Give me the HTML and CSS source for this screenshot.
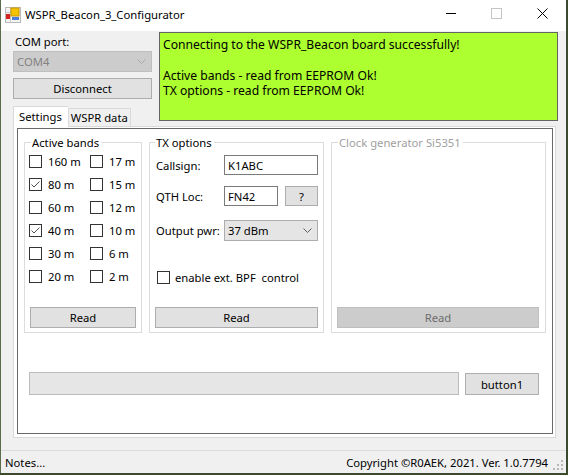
FILE: index.html
```html
<!DOCTYPE html>
<html>
<head>
<meta charset="utf-8">
<link rel="stylesheet" href="styles.css">
</head>
<body>
<div class="window">
  <div class="titlebar">
    <svg class="appicon" width="16" height="16" viewBox="0 0 16 16">
      <rect x="0.5" y="0.5" width="15" height="15" fill="#f4f4f4" stroke="#b8b8b8"/>
      <line x1="0.5" y1="5.5" x2="15.5" y2="5.5" stroke="#c8c8c8"/>
      <line x1="5.5" y1="0.5" x2="5.5" y2="15.5" stroke="#c8c8c8"/>
      <rect x="6" y="1" width="8" height="8" fill="#f5c400" stroke="#c89600"/>
      <rect x="1" y="7" width="4" height="5" fill="#d8201c"/>
      <rect x="7" y="10" width="7" height="3" fill="#4a7ed8"/>
    </svg>
    <span class="title">WSPR_Beacon_3_Configurator</span>
    <div class="winctrls">
      <svg class="wc" width="46" height="30" viewBox="0 0 46 30"><line x1="18" y1="13.5" x2="28" y2="13.5" stroke="#000"/></svg>
      <svg class="wc" width="46" height="30" viewBox="0 0 46 30"><rect x="17.5" y="8.5" width="10" height="10" fill="none" stroke="#c4c4c4"/></svg>
      <svg class="wc" width="46" height="30" viewBox="0 0 46 30"><path d="M17.5 8.5 L27.5 18.5 M27.5 8.5 L17.5 18.5" stroke="#000" stroke-width="1"/></svg>
    </div>
  </div>
  <div class="client">
    <div class="top">
      <div class="leftcol">
        <div class="lbl com-lbl">COM port:</div>
        <div class="combo combo-disabled">
          <span>COM4</span>
          <svg width="9" height="5" viewBox="0 0 9 5"><path d="M0.5 0.5 L4.5 4.5 L8.5 0.5" fill="none" stroke="#a8a8a8"/></svg>
        </div>
        <div class="btn disconnect">Disconnect</div>
        <div class="tabs">
          <div class="tab tab-active">Settings</div>
          <div class="tab">WSPR data</div>
        </div>
      </div>
      <div class="log">
        <div>Connecting to the WSPR_Beacon board successfully!</div>
        <div>&nbsp;</div>
        <div>Active bands - read from EEPROM Ok!</div>
        <div>TX options - read from EEPROM Ok!</div>
      </div>
    </div>
    <div class="tabpanel">
      <div class="page">
        <div class="groups">
          <div class="grp grp-bands">
            <div class="grp-title">Active bands</div>
            <div class="bands">
              <div class="cbrow"><span class="cb"></span><span>160 m</span></div>
              <div class="cbrow"><span class="cb"></span><span>17 m</span></div>
              <div class="cbrow"><span class="cb"><svg width="11" height="11" viewBox="0 0 11 11"><path d="M1.5 5.5 L4 8 L9.5 2.5" fill="none" stroke="#505050" stroke-width="1"/></svg></span><span>80 m</span></div>
              <div class="cbrow"><span class="cb"></span><span>15 m</span></div>
              <div class="cbrow"><span class="cb"></span><span>60 m</span></div>
              <div class="cbrow"><span class="cb"></span><span>12 m</span></div>
              <div class="cbrow"><span class="cb"><svg width="11" height="11" viewBox="0 0 11 11"><path d="M1.5 5.5 L4 8 L9.5 2.5" fill="none" stroke="#505050" stroke-width="1"/></svg></span><span>40 m</span></div>
              <div class="cbrow"><span class="cb"></span><span>10 m</span></div>
              <div class="cbrow"><span class="cb"></span><span>30 m</span></div>
              <div class="cbrow"><span class="cb"></span><span>6 m</span></div>
              <div class="cbrow"><span class="cb"></span><span>20 m</span></div>
              <div class="cbrow"><span class="cb"></span><span>2 m</span></div>
            </div>
            <div class="btn read read-bands">Read</div>
          </div>
          <div class="grp grp-tx">
            <div class="grp-title">TX options</div>
            <div class="frow frow1"><span class="flbl">Callsign:</span><span class="tbox tbox-wide">K1ABC</span></div>
            <div class="frow frow2"><span class="flbl">QTH Loc:</span><span class="tbox tbox-short">FN42</span><span class="btn qbtn">?</span></div>
            <div class="frow frow3"><span class="flbl">Output pwr:</span>
              <span class="combo combo-pwr"><span>37 dBm</span><svg width="9" height="5" viewBox="0 0 9 5"><path d="M0.5 0.5 L4.5 4.5 L8.5 0.5" fill="none" stroke="#606060"/></svg></span>
            </div>
            <div class="cbrow bpf"><span class="cb"></span><span>enable ext. BPF&nbsp; control</span></div>
            <div class="btn read read-tx">Read</div>
          </div>
          <div class="grp grp-clk">
            <div class="grp-title grp-title-dis">Clock generator Si5351</div>
            <div class="btn read read-clk">Read</div>
          </div>
        </div>
        <div class="progrow">
          <div class="progress"></div>
          <div class="btn btn1">button1</div>
        </div>
      </div>
    </div>
  </div>
  <div class="statusbar">
    <span class="notes">Notes...</span>
    <span class="copy">Copyright ©R0AEK, 2021. Ver. 1.0.7794</span>
    <svg class="grip" width="12" height="12" viewBox="0 0 12 12">
      <rect x="9" y="1" width="2" height="2" fill="#b8b8b8"/>
      <rect x="5" y="5" width="2" height="2" fill="#b8b8b8"/>
      <rect x="9" y="5" width="2" height="2" fill="#b8b8b8"/>
      <rect x="1" y="9" width="2" height="2" fill="#b8b8b8"/>
      <rect x="5" y="9" width="2" height="2" fill="#b8b8b8"/>
      <rect x="9" y="9" width="2" height="2" fill="#b8b8b8"/>
    </svg>
  </div>
</div>
</body>
</html>
```

FILE: styles.css
```css
* { box-sizing: border-box; }
html, body { margin: 0; padding: 0; }
body {
  width: 568px;
  height: 475px;
  background: #3c4a2e;
  font-family: "Noto Sans", "Liberation Sans", sans-serif;
  font-size: 11.25px;
  color: #000;
  overflow: hidden;
}
.window {
  width: 566px;
  height: 473px;
  background: #f0f0f0;
  border-left: 1px solid #5d6b4a;
  display: flex;
  flex-direction: column;
}
.titlebar {
  height: 31px;
  background: #fff;
  display: flex;
  align-items: center;
  flex: none;
}
.appicon { margin-left: 4px; margin-top: -2px; }
.title { margin-left: 4px; font-size: 11.3px; margin-top: -2px; }
.winctrls { margin-left: auto; display: flex; align-self: flex-start; }
.wc { display: block; }

.client { padding-left: 12px; flex: none; }
.top { display: flex; }
.leftcol { width: 139px; display: flex; flex-direction: column; }
.lbl { line-height: 15px; }
.com-lbl { margin-top: 3px; margin-left: 2px; }
.combo {
  display: flex;
  align-items: center;
  justify-content: space-between;
  height: 21px;
  border: 1px solid #adadad;
  padding: 0 5px 0 3px;
}
.combo-disabled {
  margin-top: 2px;
  background: #cccccc;
  border-color: #bfbfbf;
  color: #838383;
}
.btn {
  display: flex;
  align-items: center;
  justify-content: center;
  background: #e1e1e1;
  border: 1px solid #adadad;
  height: 21px;
}
.disconnect { margin-top: 6px; }
.tabs { display: flex; align-items: flex-end; margin-top: 7px; height: 20px; }
.tab {
  height: 18px;
  padding: 0 2px 0 2px;
  border: 1px solid #d9d9d9;
  border-bottom: none;
  background: #f0f0f0;
  line-height: 17px;
}
.tab-active {
  height: 21px;
  margin-bottom: -1px;
  background: #fff;
  position: relative;
  z-index: 1;
  padding: 0 6px 0 5px;
  line-height: 19px;
  border-right: none;
}
.log {
  margin-left: 7px;
  margin-top: 1px;
  width: 399px;
  height: 89px;
  background: #adff2f;
  border: 1px solid #646464;
  padding: 4px 3px;
  line-height: 15.3px;
  font-size: 12.15px;
}

.tabpanel {
  width: 543px;
  height: 312px;
  border: 1px solid #d9d9d9;
  background: #fff;
  padding: 1px 2px 3px 3px;
}
.page {
  height: 100%;
  border: 1px solid #696969;
  background: #fff;
}
.groups { display: flex; margin-top: 13px; margin-left: 6px; }
.grp {
  border: 1px solid #dcdcdc;
  height: 191px;
  display: flex;
  flex-direction: column;
}
.grp-title {
  margin: -8px 0 0 1px;
  padding: 0 2px 0 1px;
  background: #fff;
  line-height: 15px;
  align-self: flex-start;
}
.grp-bands .grp-title { margin-left: 2px; }
.grp-tx .grp-title { margin-left: 0; }
.grp-title-dis { color: #a0a0a0; }
.grp-bands { width: 118px; padding: 0 0 4px 4px; }
.grp-tx { width: 175px; margin-left: 7px; padding: 0 0 4px 5px; }
.grp-clk { width: 215px; margin-left: 7px; padding: 0 0 4px 5px; }

.bands { display: grid; grid-template-columns: 61px 1fr; grid-auto-rows: 23px; }
.cbrow { display: flex; align-items: center; }
.cb {
  width: 13px;
  height: 13px;
  border: 1px solid #333;
  background: #fff;
  flex: none;
  margin-right: 6px;
  display: flex;
  align-items: center;
  justify-content: center;
}
.cb svg { display: block; }
.read { margin-top: auto; }
.read-bands { width: 106px; margin-left: 1px; }
.read-tx { width: 163px; margin-left: 0; }
.read-clk { width: 202px; background: #cccccc; border-color: #bfbfbf; color: #6d6d6d; }

.frow { display: flex; align-items: center; }
.flbl { width: 69px; padding-left: 1px; white-space: nowrap; }
.frow1 { margin-top: 5px; }
.frow2 { margin-top: 11px; }
.frow3 { margin-top: 14px; }
.tbox {
  height: 20px;
  border: 1px solid #7a7a7a;
  background: #fff;
  display: flex;
  align-items: center;
  padding-left: 3px;
}
.tbox-wide { width: 94px; }
.tbox-short { width: 54px; }
.qbtn { width: 33px; height: 20px; margin-left: 7px; }
.combo-pwr { width: 94px; background: #e5e5e5; }
.bpf { margin-top: 29px; margin-left: 2px; }
.bpf .cb { margin-right: 5px; }

.progrow { display: flex; margin-top: 39px; margin-left: 11px; }
.progress {
  width: 430px;
  height: 23px;
  background: #e6e6e6;
  border: 1px solid #bcbcbc;
}
.btn1 { width: 74px; height: 22px; margin-left: 6px; margin-top: 1px; }

.statusbar {
  margin-top: auto;
  height: 23px;
  border-top: 1px solid #dcdcdc;
  display: flex;
  align-items: center;
  padding-left: 4px;
  flex: none;
}
.copy { margin-left: auto; margin-right: 4px; }
.grip { margin-right: 2px; margin-top: 6px; }
```
